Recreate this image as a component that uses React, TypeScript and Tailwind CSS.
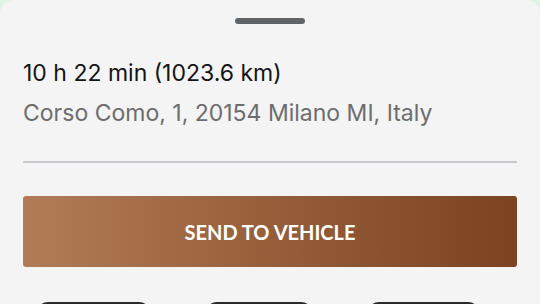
export default function App() {
  return (
    <div className="h-[304px] w-[540px] overflow-hidden bg-[#dff3e4]">
      <div className="flex h-full flex-col rounded-t-[14px] bg-[#f4f4f4] px-[23px]">
        <div className="mt-[18px] h-[6px] w-[70px] shrink-0 self-center rounded-full bg-[#5e6468]" />
        <div
          className="mt-[34px] shrink-0 text-[23px] leading-[30px] text-[#141414]"
          style={{ fontFamily: "Inter, 'Liberation Sans', sans-serif" }}
        >
          10 h 22 min (1023.6 km)
        </div>
        <div
          className="mt-[10px] shrink-0 text-[23px] leading-[30px] text-[#6d6d6d]"
          style={{ fontFamily: "Inter, 'Liberation Sans', sans-serif" }}
        >
          Corso Como, 1, 20154 Milano MI, Italy
        </div>
        <div className="mt-[33px] h-[2px] shrink-0 bg-[#c9c9ce]" />
        <button
          className="mt-[33px] flex h-[71px] shrink-0 items-center justify-center rounded-[3px] bg-gradient-to-r from-[#b27c56] to-[#7b431f] text-[20px] font-bold text-white"
          style={{ fontFamily: "Lato, sans-serif" }}
        >
          SEND TO VEHICLE
        </button>
        <div className="mt-[35px] flex shrink-0">
          <div className="ml-[13px] h-[20px] w-[115px] rounded-t-[12px] border-2 border-[#2a2a2a] bg-[#e6e6e6]" />
          <div className="ml-[54px] h-[20px] w-[108px] rounded-t-[12px] border-2 border-[#2a2a2a] bg-[#e6e6e6]" />
          <div className="ml-[54px] h-[20px] w-[113px] rounded-t-[12px] border-2 border-[#2a2a2a] bg-[#e6e6e6]" />
        </div>
      </div>
    </div>
  );
}
